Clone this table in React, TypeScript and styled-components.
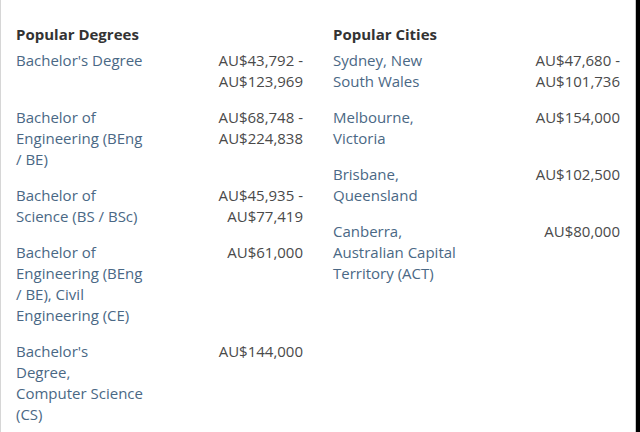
import React from "react";
import styled, { createGlobalStyle } from "styled-components";

const Global = createGlobalStyle`
  html, body { margin: 0; padding: 0; background: #000; }
  body { font-family: "Open Sans", "Liberation Sans", sans-serif; }
`;

const Frame = styled.div`
  width: 636px;
  height: 432px;
  box-sizing: border-box;
  background: #fff;
  border-left: 1px solid #d6d6d6;
  border-right: 1px solid #c8c8c8;
  display: grid;
  grid-template-columns: 317px 317px;
  overflow: hidden;
`;

const Column = styled.section`
  padding: 24px 15px 0 15px;
  display: flex;
  flex-direction: column;
`;

const Title = styled.h3`
  margin: 0 0 5px;
  font-size: 15px;
  line-height: 21px;
  font-weight: 700;
  color: #333;
`;

const Row = styled.div`
  display: flex;
  justify-content: space-between;
  align-items: flex-start;
  margin-bottom: 15px;
  font-size: 15px;
  line-height: 21px;
`;

const Label = styled.a`
  width: 128px;
  flex: none;
  color: #4a6885;
  text-decoration: none;
`;

const Salary = styled.div`
  color: #4a4a4a;
  text-align: right;
  width: 100px;
`;

const degrees = [
  ["Bachelor's Degree", "AU$43,792 -\nAU$123,969"],
  ["Bachelor of Engineering (BEng / BE)", "AU$68,748 -\nAU$224,838"],
  ["Bachelor of Science (BS / BSc)", "AU$45,935 -\nAU$77,419"],
  ["Bachelor of Engineering (BEng / BE), Civil Engineering (CE)", "AU$61,000"],
  ["Bachelor's Degree, Computer Science (CS)", "AU$144,000"],
];

const cities = [
  ["Sydney, New South Wales", "AU$47,680 -\nAU$101,736"],
  ["Melbourne, Victoria", "AU$154,000"],
  ["Brisbane, Queensland", "AU$102,500"],
  ["Canberra, Australian Capital Territory (ACT)", "AU$80,000"],
];

const lines = (s: string) =>
  s.split("\n").map((l, i) => <div key={i}>{l}</div>);

export default function App() {
  return (
    <>
      <Global />
      <Frame>
        <Column>
          <Title>Popular Degrees</Title>
          {degrees.map(([l, s]) => (
            <Row key={l}>
              <Label href="#">{l}</Label>
              <Salary>{lines(s)}</Salary>
            </Row>
          ))}
        </Column>
        <Column>
          <Title>Popular Cities</Title>
          {cities.map(([l, s]) => (
            <Row key={l}>
              <Label href="#">{l}</Label>
              <Salary>{lines(s)}</Salary>
            </Row>
          ))}
        </Column>
      </Frame>
    </>
  );
}
